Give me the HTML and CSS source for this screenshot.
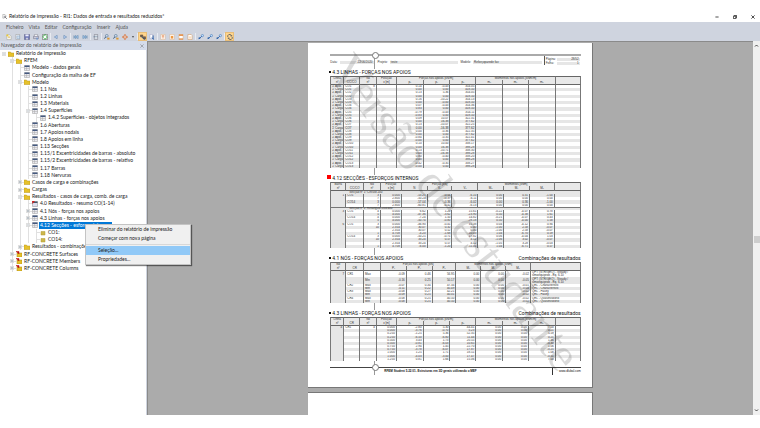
FILE: index.html
```html
<!DOCTYPE html>
<html lang="pt">
<head>
  <meta charset="UTF-8">
  <meta name="viewport" content="width=device-width, initial-scale=1.0">
  <title>Relatório de impressão</title>
  <link rel="stylesheet" href="styles.css">
</head>
<body>

  <div class="app">
    <header class="titlebar">
      <svg class="app-icon" viewBox="0 0 12 12"><path d="M2 1h5l2 2v4M2 1v9h3" fill="#fff" stroke="#777"/><circle cx="7" cy="7" r="2" fill="#dde" stroke="#333"/><path d="M8.500 8.500l3 3" stroke="#222" stroke-width="1.500"/></svg>
      <h1>Relatório de impressão - RI1: Dados de entrada e resultados reduzidos*</h1>
      <div class="window-buttons">
        <button type="button" aria-label="Minimizar"><svg viewBox="0 0 10 10"><path d="M1 5h8"/></svg></button>
        <button type="button" aria-label="Restaurar"><svg viewBox="0 0 10 10"><path d="M1 3h6v6H1zM3 3V1h6v6H7"/></svg></button>
        <button type="button" aria-label="Fechar"><svg viewBox="0 0 10 10"><path d="M1 1l8 8M9 1L1 9"/></svg></button>
      </div>
    </header>

    <nav class="menubar">
      <button type="button">Ficheiro</button>
      <button type="button">Vista</button>
      <button type="button">Editar</button>
      <button type="button">Configuração</button>
      <button type="button">Inserir</button>
      <button type="button">Ajuda</button>
    </nav>

    <div class="toolbar" id="toolbar"></div>

    <div class="workspace">
      <aside class="sidebar">
        <div class="panel-title">
          <h2>Navegador do relatório de impressão</h2>
          <button type="button" aria-label="Fechar painel"><svg viewBox="0 0 10 10"><path d="M1 1l8 8M9 1L1 9"/></svg></button>
        </div>
        <ul class="tree" id="tree"></ul>
        <div class="context-menu">
          <button type="button">Eliminar do relatório de impressão</button>
          <button type="button">Começar com nova página</button>
          <hr>
          <button type="button" class="active">Seleção...</button>
          <button type="button">Propriedades...</button>
        </div>
      </aside>

      <main class="canvas">
        <div class="sheet">
          <div class="doc-head">
            <span>Data:</span><span class="field date">22/06/2020</span>
            <span>Projeto:</span><span class="field wide">teste</span>
            <span>Modelo:</span><span class="field wide">Reforçoparede fav</span>
            <div class="page-no">
              <span>Página:</span><span class="field">28/52</span>
              <span>Folha:</span><span class="field">1</span>
            </div>
          </div>

          <section>
            <div class="doc-title"><h3>4.3 LINHAS - FORÇAS NOS APOIOS</h3></div>
            <table class="lines" id="lines-a"></table>
          </section>
          <section>
            <div class="doc-title current"><h3>4.12 SECÇÕES - ESFORÇOS INTERNOS</h3></div>
            <table class="members" id="members"></table>
          </section>
          <section>
            <div class="doc-title"><h3>4.1 NÓS - FORÇAS NOS APOIOS</h3><p>Combinações de resultados</p></div>
            <table class="nodes" id="nodes"></table>
          </section>
          <section>
            <div class="doc-title"><h3>4.3 LINHAS - FORÇAS NOS APOIOS</h3><p>Combinações de resultados</p></div>
            <table class="lines-short" id="lines-b"></table>
          </section>

          <footer class="doc-foot">
            <strong>RFEM Student 5.22.01- Estruturas em 3D gerais utilizando o MEF</strong>
            <a href="#">www.dlubal.com</a>
          </footer>
          <div class="watermark">Versão de estudante</div>
        </div>
        <div class="sheet next"></div>
      </main>

      <div class="scrollbar">
        <svg viewBox="0 0 10 10"><path d="M2 7l3-3 3 3"/></svg>
        <div class="thumb"></div>
        <svg viewBox="0 0 10 10"><path d="M2 3l3 3 3-3"/></svg>
      </div>
    </div>
  </div>

  <script src="report.js"></script>
</body>
</html>
```

FILE: styles.css
```css
* {
  box-sizing: border-box;
}

body {
  margin: 0;
  height: 100vh;
  padding: 11px 0 13px;
  background: #fff;
  color: #1a1a1a;
  font: 5px/7px Lato, "Open Sans", sans-serif;
}

h1, h2, h3, p, ul, hr {
  margin: 0;
  padding: 0;
  font: inherit;
}

button {
  margin: 0;
  padding: 0;
  border: 0;
  background: none;
  color: inherit;
  font: inherit;
}

svg {
  display: block;
}

.app {
  display: flex;
  flex-direction: column;
  height: 100%;
}

/* title bar and menus */
.titlebar {
  display: flex;
  align-items: center;
  height: 11px;
  padding: 0 5px 0 2px;
  gap: 2px;
}

.app-icon {
  width: 5px;
  height: 5px;
}

.window-buttons {
  display: flex;
  gap: 14px;
  margin-left: auto;
}

.window-buttons svg {
  width: 4px;
  height: 4px;
  fill: none;
  stroke: #222;
  stroke-width: 2;
}

.menubar {
  display: flex;
  align-items: center;
  gap: 5px;
  height: 10px;
  padding: 0 6px;
  background: #cfd4df;
  color: #555;
}

.toolbar {
  display: flex;
  align-items: center;
  height: 9px;
  padding: 0 4px;
  background: #cfd4df;
}

.toolbar button {
  display: flex;
  justify-content: center;
  align-items: center;
  width: 9px;
  height: 9px;
}

.toolbar button.on {
  background: #ffd58c;
  outline: 1px solid #e8bd78;
  outline-offset: -1px;
}

.toolbar button.caret {
  width: 7px;
}

.toolbar svg {
  width: 6px;
  height: 6px;
}

.toolbar .sep {
  width: 2px;
  height: 7px;
  border-right: 1px solid #e8ebf1;
}

/* navigator */
.workspace {
  display: flex;
  flex: 1;
  min-height: 0;
}

.sidebar {
  position: relative;
  z-index: 2;
  flex: 0 0 148px;
  border-right: 1px solid #8a8a8a;
  box-shadow: inset -1px 0 #cfd4df;
}

.panel-title {
  display: flex;
  justify-content: space-between;
  align-items: center;
  height: 9px;
  padding: 0 3px 0 1px;
  background: #d5dcea;
  color: #555;
}

.panel-title svg {
  width: 4px;
  height: 4px;
  fill: none;
  stroke: #555;
  stroke-width: 1;
}

.tree {
  display: grid;
  height: 222px;
  list-style: none;
}

.tree li {
  display: flex;
  align-items: center;
  white-space: nowrap;
}

.tree li::before {
  content: "";
  align-self: stretch;
  background: repeating-linear-gradient(90deg, transparent 0 4px, #e0e0e0 4px 5px, transparent 5px 8px);
}

.tree .depth-2::before { width: 8px; }
.tree .depth-3::before { width: 16px; }
.tree .depth-4::before { width: 24px; }

.tree li:not(.depth-0) {
  padding-left: 8px;
}

.branch {
  display: flex;
  align-items: center;
  align-self: stretch;
  width: 8px;
  padding-left: 2px;
  background: linear-gradient(#e0e0e0, #e0e0e0) 4px 0 / 1px 100% no-repeat,
    linear-gradient(#e0e0e0, #e0e0e0) 4px 50% / 4px 1px no-repeat;
}

.depth-0 .branch {
  background: none;
}

.branch svg {
  width: 4px;
  height: 4px;
}

.tree .icon {
  width: 6px;
  height: 6px;
  margin-right: 1px;
}

.tree .label {
  padding: 0 1px;
}

.tree .selected .label {
  min-width: 68px;
  background: #0078d7;
  color: #fff;
}

.context-menu {
  position: absolute;
  left: 85px;
  top: 183px;
  width: 106px;
  background: #f0f0f0;
  border: 1px solid #c4c4c4;
  box-shadow: 1px 1px 1px rgba(0, 0, 0, 0.5);
}

.context-menu button {
  display: block;
  width: 100%;
  padding: 0 12px;
  line-height: 9px;
  text-align: left;
}

.context-menu hr {
  height: 1px;
  margin: 1px 0;
  border: 0;
  background: #d8d8d8;
}

.context-menu .active {
  background: #91c9f7;
}

/* preview area */
.canvas {
  flex: 1;
  overflow: hidden;
  background: #ababab;
  border-top: 1px solid #8a8a8a;
}

.sheet {
  position: relative;
  width: 47%;
  margin: 1px auto 4px;
  padding: 11px 11px 12px 22px;
  overflow: hidden;
  background: #fff;
  border-right: 1px solid #777;
  border-bottom: 1px solid #777;
  color: #333;
  font: 3px/3px "Liberation Sans", Arial, sans-serif;
}

.sheet.next {
  height: 60px;
  border-top: 1px solid #777;
}

/* fold line running behind the sections */
.sheet:not(.next)::before {
  content: "";
  position: absolute;
  left: 66px;
  top: 15px;
  bottom: 12px;
  width: 1px;
  background: #999;
}

.doc-head,
.doc-foot {
  position: relative;
  display: flex;
  align-items: center;
}

.doc-head {
  height: 15px;
  gap: 2px;
  border-top: 2px solid #aaa;
}

.doc-head::before,
.doc-foot::before {
  content: "";
  position: absolute;
  left: 42px;
  top: -4px;
  width: 5px;
  height: 5px;
  border: 1px solid #777;
  border-radius: 50%;
  background: #fff;
}

.field {
  padding: 0 1px;
  background: #e6e6e6;
}

.field.date {
  width: 34px;
  margin-right: 2px;
  text-align: right;
}

.field.wide {
  flex: 1;
}

.page-no {
  display: grid;
  grid-template-columns: 10px 23px;
  align-self: flex-start;
  gap: 1px;
  padding: 2px 1px 0;
  border-left: 1px solid #555;
}

.page-no .field {
  text-align: right;
}

.sheet section {
  position: relative;
  margin-bottom: 7px;
  background: #fff;
}

.doc-title {
  position: relative;
  display: flex;
  justify-content: space-between;
  padding-left: 2px;
  color: #111;
  font: 5px/7px Roboto, Arial, sans-serif;
}

.doc-title::before {
  content: "";
  position: absolute;
  left: -1px;
  top: 2px;
  width: 2px;
  height: 2px;
  background: #111;
}

.doc-title.current::before {
  left: -3px;
  top: 0;
  width: 4px;
  height: 4px;
  background: #f00;
}

table {
  width: 100%;
  table-layout: fixed;
  border-collapse: separate;
  border-spacing: 0;
  border-left: 1px solid #777;
}

.lines { height: 92px; }
.members { height: 66px; }
.nodes { height: 41px; }
.lines-short { height: 44px; }

th, td {
  height: 3px;
  padding: 0 1px;
  border-right: 1px solid #777;
  text-align: right;
  font-weight: normal;
  white-space: nowrap;
  overflow: hidden;
}

th {
  height: 4px;
  background: #e8e8e8;
  text-align: center;
}

sub {
  font-size: 2px;
  line-height: 1px;
  vertical-align: baseline;
}

thead tr:first-child th {
  border-top: 1px solid #666;
}

thead tr:last-child th {
  height: 5px;
  border-bottom: 1px solid #666;
}

tbody tr:nth-child(even) td,
tbody td:first-child {
  background: #e6e6e6;
}

td.text {
  text-align: left;
}

td.group {
  padding-left: 18px;
  text-align: left;
}

tbody tr:not(:first-child) td.group {
  box-shadow: inset 0 1px #777;
}

.doc-foot {
  height: 8px;
  margin-top: -1px;
  padding-left: 54px;
  justify-content: space-between;
  border-top: 1px solid #444;
  color: #111;
}

.doc-foot a {
  padding: 2px 0 2px 6px;
  border-left: 1px solid #333;
  color: inherit;
  text-decoration: none;
}

.watermark {
  position: absolute;
  z-index: 1;
  left: 52%;
  top: 49%;
  color: rgba(0, 0, 0, 0.14);
  font: 48px/48px "Liberation Serif", "Times New Roman", serif;
  white-space: nowrap;
  transform: translate(-50%, -50%) rotate(53deg);
}

.scrollbar {
  display: flex;
  flex-direction: column;
  align-items: center;
  justify-content: space-between;
  flex: 0 0 7px;
  padding: 2px 0;
  background: #f0f0f0;
}

.scrollbar svg {
  width: 5px;
  height: 5px;
  fill: none;
  stroke: #444;
  stroke-width: 2;
}

.scrollbar .thumb {
  width: 6px;
  height: 7px;
  margin-top: 22px;
  background: #cdcdcd;
}
```

FILE: report.js
```js
const icons = {
  newPage: '<path d="M2 2h6l3 3v7H2z" fill="#fff" stroke="#998"/><path d="M4 6h5M4 8h5" stroke="#c90"/><path d="M1 1h4v4H1z" fill="#ec3"/>',
  open: '<path d="M2 1h8v11H2z" fill="#fff" stroke="#888"/><path d="M4 4h6v6H4z" fill="#cde" stroke="#79b"/>',
  save: '<path d="M1 1h11v11H1z" fill="#6a74b4" stroke="#557"/><path d="M3 1h7v4H3z" fill="#eef"/><path d="M4 8h5v4H4z" fill="#ccd"/>',
  print: '<path d="M3 1h7v5H3z" fill="#fff" stroke="#778"/><path d="M1 5h11v5H1z" fill="#ccd" stroke="#667"/><path d="M7 8h4v4H7z" fill="#79c"/>',
  refresh: '<path d="M1 1h11v11H1z" fill="#fff" stroke="#444"/><path d="M3 8a4 4 0 0 1 7-4M10 5a4 4 0 0 1-6 5" fill="none" stroke="#3a4" stroke-width="2"/>',
  prev: '<path d="M9 3v7L3 6.500z" fill="#cdf" stroke="#369"/>',
  next: '<path d="M4 3v7l6-3.500z" fill="#cdf" stroke="#369"/>',
  first: '<path d="M2 3v7M6 3v7L3 6.500zM11 3v7L7 6.500z" fill="#bdf" stroke="#369"/>',
  last: '<path d="M11 3v7M7 3v7l3-3.500zM2 3v7l4-3.500z" fill="#bdf" stroke="#369"/>',
  page: '<path d="M3 1h7v11H3z" fill="#fff" stroke="#556"/><path d="M1 6h9M5 4h3M5 9h3" stroke="#357"/>',
  find: '<circle cx="6" cy="4" r="3" fill="#cde" stroke="#357"/><path d="M4 6l-3 4" stroke="#357" stroke-width="2"/><path d="M7 8h5v4H7z" fill="#d93"/>',
  move: '<path d="M6.500 0l3 3.500h-6zM6.500 13l3-3.500h-6zM0 6.500l3.500-3v6zM13 6.500l-3.500-3v6z" fill="#d62"/><circle cx="6.500" cy="6.500" r="2" fill="#fff" stroke="#d62"/>',
  caret: '<path d="M4 5h5L6.500 8z" fill="#333"/>',
  navigator: '<path d="M1 2h5v4H1zM7 6h5v5H7z" fill="#765" stroke="#433"/><path d="M3 6l8 6" stroke="#357" stroke-width="2"/>',
  search: '<path d="M2 1h6v9H2z" fill="#fff" stroke="#99b"/><path d="M9 3v8M6 8l5 4" stroke="#36a" stroke-width="2"/>',
  text: '<path d="M2 1h9v11H2z" fill="#fff" stroke="#da7"/><path d="M4 4h5M6.500 4v6" stroke="#d62" stroke-width="1.500"/>',
  image: '<path d="M2 1h9v11H2z" fill="#fff" stroke="#da7"/><path d="M4 4h5v6H4z" fill="#e94"/>',
  header: '<path d="M2 1h9v11H2z" fill="#fff" stroke="#da7"/><path d="M2 1h9v3H2zM2 10h9v2H2z" fill="#d72"/>',
  blank: '<path d="M2 1h7l2 2v9H2z" fill="#fff" stroke="#c84"/><path d="M4 5h5v5H4z" fill="#fdb"/>',
  link: '<path d="M2 11l7-7" stroke="#36a" stroke-width="2"/><circle cx="9.500" cy="3.500" r="2.500" fill="#bdf" stroke="#36a"/><circle cx="3" cy="9" r="2" fill="#36a"/>',
  sync: '<path d="M2 7a4 4 0 0 1 7-4M11 6a4 4 0 0 1-7 4" fill="none" stroke="#666" stroke-width="2"/><path d="M8 1l4 3-4 2zM5 12L1 9l4-2z" fill="#666"/>'
};

const treeIcons = {
  folder: '<path d="M0 2h5l1 2h6v7H0z" fill="#e6c12a" stroke="#b8941c"/>',
  small: '<path d="M2 3h8v7H2z" fill="#cdb64a" stroke="#b09a35"/>',
  sheet: '<path d="M1 1h10v10H1z" fill="#e8e8ee" stroke="#999"/><path d="M1 1h10v3H1z" fill="#44597f"/><path d="M1 7h10M5 4v7" stroke="#aaa"/>',
  marked: '<path d="M1 1h10v10H1z" fill="#dde" stroke="#888"/><path d="M1 1h10v3H1z" fill="#456"/><path d="M0 0h6L1 6z" fill="#c22"/>',
  module: '<path d="M2 4h10v8H2z" fill="#e6c12a" stroke="#a98510"/><path d="M0 1h6v5z" fill="#b11" stroke="#b11"/>'
};

// name, label, pressed
const tools = [
  ['newPage', 'Novo'], ['open', 'Abrir'], ['save', 'Guardar'], ['print', 'Imprimir'], ['refresh', 'Atualizar'], null,
  ['prev', 'Anterior'], ['next', 'Seguinte'], null,
  ['first', 'Primeira página'], ['last', 'Última página'], null,
  ['page', 'Ir para página'], null,
  ['find', 'Aumentar'], ['find', 'Reduzir'], ['move', 'Mover'], ['caret', 'Mais'], null,
  ['navigator', 'Navegador', true], ['search', 'Procurar'], null,
  ['text', 'Texto'], ['image', 'Imagem'], ['header', 'Cabeçalho'], ['blank', 'Página'], null,
  ['link', 'Ligar'], ['link', 'Exportar'], ['link', 'Enviar'], null,
  ['sync', 'Sincronizar', true]
];

document.getElementById('toolbar').innerHTML = tools.map(tool => {
  if (!tool) return '<span class="sep"></span>';
  const [name, label, on] = tool;
  return `<button type="button" class="${on ? 'on' : name}" aria-label="${label}"><svg viewBox="0 0 13 13">${icons[name]}</svg></button>`;
}).join('');

// depth, icon, label, expander
const nodes = [
  [0, 'folder', 'Relatório de impressão', '-'],
  [1, 'folder', 'RFEM', '-'],
  [2, 'sheet', 'Modelo - dados gerais'],
  [2, 'sheet', 'Configuração da malha de EF'],
  [2, 'folder', 'Modelo', '-'],
  [3, 'sheet', '1.1 Nós'],
  [3, 'sheet', '1.2 Linhas'],
  [3, 'sheet', '1.3 Materiais'],
  [3, 'sheet', '1.4 Superfícies', '-'],
  [4, 'sheet', '1.4.2 Superfícies - objetos integrados'],
  [3, 'sheet', '1.6 Aberturas'],
  [3, 'sheet', '1.7 Apoios nodais'],
  [3, 'sheet', '1.8 Apoios em linha'],
  [3, 'sheet', '1.13 Secções'],
  [3, 'sheet', '1.15/1 Excentricidades de barras - absoluto'],
  [3, 'sheet', '1.15/2 Excentricidades de barras - relativo'],
  [3, 'sheet', '1.17 Barras'],
  [3, 'sheet', '1.18 Nervuras'],
  [2, 'folder', 'Casos de carga e combinações', '+'],
  [2, 'folder', 'Cargas', '+'],
  [2, 'folder', 'Resultados - casos de carga, comb. de carga', '-'],
  [3, 'marked', '4.0 Resultados - resumo CO(1-14)'],
  [3, 'sheet', '4.1 Nós - forças nos apoios', '+'],
  [3, 'sheet', '4.3 Linhas - forças nos apoios', '+'],
  [3, 'sheet', '4.12 Secções - esforços internos', '-', true],
  [4, 'small', 'CO1:'],
  [4, 'small', 'CO14:'],
  [2, 'folder', 'Resultados - combinações', '+'],
  [1, 'module', 'RF-CONCRETE Surfaces', '+'],
  [1, 'module', 'RF-CONCRETE Members', '+'],
  [1, 'module', 'RF-CONCRETE Columns', '+']
];

document.getElementById('tree').innerHTML = nodes.map(([depth, icon, label, box, selected]) => {
  const sign = box === '+' ? 'M2.500 5h5M5 2.500v5' : 'M2.500 5h5';
  const expander = box
    ? `<svg viewBox="0 0 10 10"><path d="M1 1h8v8H1z" fill="#fff" stroke="#aaa"/><path d="${sign}" stroke="#456"/></svg>`
    : '';
  return `<li class="depth-${depth}${selected ? ' selected' : ''}"><span class="branch">${expander}</span>` +
    `<svg class="icon" viewBox="0 0 12 12">${treeIcons[icon]}</svg><span class="label">${label}</span></li>`;
}).join('');

// Fill a table: relative column widths, two header rows, body rows
function fillTable(id, widths, groups, heads, rows, textCols) {
  const cols = widths.map(w => `<col style="width:${w / 2.51}%">`).join('');
  const top = groups.map(([text, span]) => `<th colspan="${span}">${text}</th>`).join('');
  const head = heads.map(text => `<th>${text}</th>`).join('');
  const body = rows.map(row => {
    if (row.length === 1) {
      return `<tr><td class="group" colspan="${widths.length}">${row[0]}</td></tr>`;
    }
    const cells = widths.map((w, i) => `<td${textCols.includes(i) ? ' class="text"' : ''}>${row[i] || ''}</td>`);
    return `<tr>${cells.join('')}</tr>`;
  }).join('');
  document.getElementById(id).innerHTML =
    `<colgroup>${cols}</colgroup><thead><tr>${top}</tr><tr>${head}</tr></thead><tbody>${body}</tbody>`;
}

const lineWidths = [13, 16, 17, 20, 27, 27, 26, 27, 26, 27, 25];
const lineGroups = [['Linha', 1], ['', 1], ['Nó', 1], ['Posição', 1], ['Forças nos apoios [kN/m]', 3], ['Momentos nos apoios [kNm/m]', 3], ['', 1]];

const px = ['0.14', '0.00', '0.13', '0.00', '0.16', '0.00', '0.07', '0.83', '-0.79', '-0.83', '0.09', '0.00', '0.13',
  '0.00', '0.00', '0.00', '-0.84', '-0.00', '0.10', '0.00', '0.13', '0.00', '0.80', '0.00', '-0.42', '-0.00'];
const py = ['-0.43', '0.00', '5.36', '0.00', '-10.22', '-0.00', '-0.43', '0.00', '-0.43', '0.00', '10.07', '16.38', '-10.07',
  '-16.38', '-0.36', '0.00', '-0.35', '0.00', '10.00', '16.38', '-10.71', '-16.38', '-0.40', '0.00', '-0.35', '0.00'];
const pz = ['354.05', '418.50', '354.05', '418.50', '354.13', '418.50', '354.36', '418.50', '354.11', '418.50', '322.31', '377.62', '322.25',
  '377.62', '322.35', '377.62', '322.41', '377.62', '338.17', '398.28', '338.30', '398.28', '338.20', '398.28', '338.27', '398.28'];

fillTable('lines-a', lineWidths, lineGroups,
  ['nº', 'CC/CO', 'nº', 'x [m]', 'p<sub>x</sub>', 'p<sub>y</sub>', 'p<sub>z</sub>', 'm<sub>x</sub>', 'm<sub>y</sub>', 'm<sub>z</sub>', ''],
  px.map((value, i) => [i % 2 ? 'Σ Carga' : 'Σ Apoi.', 'CO' + (Math.floor(i / 2) + 1), i ? '' : '8', '', value, py[i], pz[i]]),
  [0, 1]);

fillTable('members', [15, 18, 17, 21, 26, 25, 26, 26, 26, 25, 26],
  [['Barra', 1], ['', 1], ['Nó', 1], ['Posição', 1], ['Forças [kN]', 3], ['Momentos [kNm]', 3], ['', 1]],
  ['nº', 'CC/CO', 'nº', 'x [m]', 'N', 'V<sub>y</sub>', 'V<sub>z</sub>', 'M<sub>T</sub>', 'M<sub>y</sub>', 'M<sub>z</sub>', ''],
  [
    ['Secção nº 1: Círculo 200'],
    ['1', 'CO1', '3', '0.000', '-53.21', '-0.54', '-6.10', '0.00', '0.31', '-1.00'],
    ['', '', '7', '2.800', '-50.24', '-0.37', '-6.11', '0.00', '0.00', '0.00'],
    ['', 'CO14', '3', '0.000', '-57.04', '-0.36', '-6.02', '0.00', '0.36', '-1.00'],
    ['', '', '7', '2.800', '-60.81', '-0.42', '-6.13', '0.00', '0.00', '0.00'],
    ['Secção nº 2: Retângulo 200/400'],
    ['3', 'CO1', '4', '0.000', '6.62', '1.20', '15.61', '-0.22', '-4.07', '0.78'],
    ['', '', '5', '4.000', '-47.36', '-3.62', '-23.90', '0.50', '-4.38', '1.61'],
    ['', 'CO14', '4', '0.000', '-7.24', '1.50', '14.82', '-0.21', '-4.07', '0.43'],
    ['', '', '5', '4.000', '-50.74', '-0.80', '-28.18', '0.50', '-4.00', '1.58'],
    ['6', 'CO1', '3', '0.000', '-46.90', '-0.41', '15.38', '0.04', '-4.12', '0.94'],
    ['', '', '10', '2.354', '30.07', '0.32', '0.00', '-1.00', '2.58', '-0.07'],
    ['', '', '', '2.354', '30.07', '0.52', '0.00', '-1.00', '2.58', '-0.07'],
    ['', '', '1', '4.708', '-4.20', '-1.68', '-10.03', '1.04', '-6.70', '0.59'],
    ['', 'CO14', '3', '0.000', '-50.25', '-0.71', '17.82', '0.06', '-4.04', '1.03'],
    ['', '', '10', '2.354', '33.24', '0.57', '4.12', '-1.06', '3.02', '-0.07'],
    ['', '', '', '2.354', '33.24', '0.57', '4.12', '-1.05', '3.28', '-0.03'],
    ['', '', '1', '4.708', '-6.00', '-1.20', '-11.01', '1.04', '-6.71', '0.57']
  ],
  [1]);

fillTable('nodes', [15, 18, 17, 26, 26, 24, 25, 25, 25, 50],
  [['Nó', 1], ['', 1], ['', 1], ['Forças nos apoios [kN]', 3], ['Momentos nos apoios [kNm]', 3], ['', 1]],
  ['nº', 'CR', '', 'P<sub>x</sub>', 'P<sub>y</sub>', 'P<sub>z</sub>', 'M<sub>x</sub>', 'M<sub>y</sub>', 'M<sub>z</sub>', ''],
  [
    ['7', 'CR1', 'Max', '-0.09', '0.46', '56.95', '0.00', '0.00', '-0.02', 'QPT (STR/GEO) - Steady /<br>simoequiprob - Eq. 6.10'],
    ['', '', 'Min', '-0.16', '0.25', '50.17', '0.00', '0.00', '-0.05', 'QPT (STR/GEO) - Steady /<br>simoequiprob - Eq. 6.10'],
    ['', 'CR2', 'Max', '-0.07', '0.34', '47.34', '0.00', '0.00', '-0.01', 'QEL - Characteristic'],
    ['', '', 'Min', '-0.11', '0.22', '40.49', '0.00', '0.00', '-0.04', 'QEL - Characteristic'],
    ['', 'CR3', 'Max', '-0.08', '0.27', '42.21', '0.00', '0.00', '-0.02', 'QEL - Faulty'],
    ['', '', 'Min', '-0.09', '0.25', '40.01', '0.00', '0.00', '-0.02', 'QEL - Faulty'],
    ['', 'CR4', 'Max', '-0.08', '0.25', '40.50', '0.00', '0.00', '-0.02', 'QEL - Quasestatório'],
    ['', '', 'Min', '-0.08', '0.25', '40.50', '0.00', '0.00', '-0.02', 'QEL - Quasestatório']
  ],
  [1, 2, 9]);

fillTable('lines-b', lineWidths, lineGroups,
  ['nº', 'CR', 'nº', 'x [m]', 'p<sub>x</sub>', 'p<sub>y</sub>', 'p<sub>z</sub>', 'm<sub>x</sub>', 'm<sub>y</sub>', 'm<sub>z</sub>', ''],
  [
    ['4', 'CR1', '4', '0.000', '-2.80', '5.30', '44.41', '0.00', '0.00', '7.00'],
    ['', '', '', '0.000', '-3.76', '-0.70', '5.23', '0.00', '0.00', '0.21'],
    ['', '', '', '0.250', '-1.25', '5.36', '52.35', '0.00', '0.00', '5.59'],
    ['', '', '', '0.250', '-6.50', '-6.80', '11.44', '0.00', '0.00', '0.21'],
    ['', '', '', '0.500', '3.43', '1.73', '20.55', '0.00', '0.00', '1.46'],
    ['', '', '', '0.500', '-0.81', '-6.03', '10.65', '0.00', '0.00', '-0.30'],
    ['', '', '', '0.750', '2.94', '1.45', '22.70', '0.00', '0.00', '1.06'],
    ['', '', '', '0.750', '-3.78', '-6.07', '17.87', '0.00', '0.00', '-0.25'],
    ['', '', '', '1.000', '1.25', '1.71', '18.51', '0.00', '0.00', '1.08'],
    ['', '', '', '1.000', '-4.03', '-3.00', '17.47', '0.00', '0.00', '-0.51'],
    ['', '', '', '1.250', '0.81', '1.66', '15.06', '0.00', '0.00', '7.00']
  ],
  [1]);
```
